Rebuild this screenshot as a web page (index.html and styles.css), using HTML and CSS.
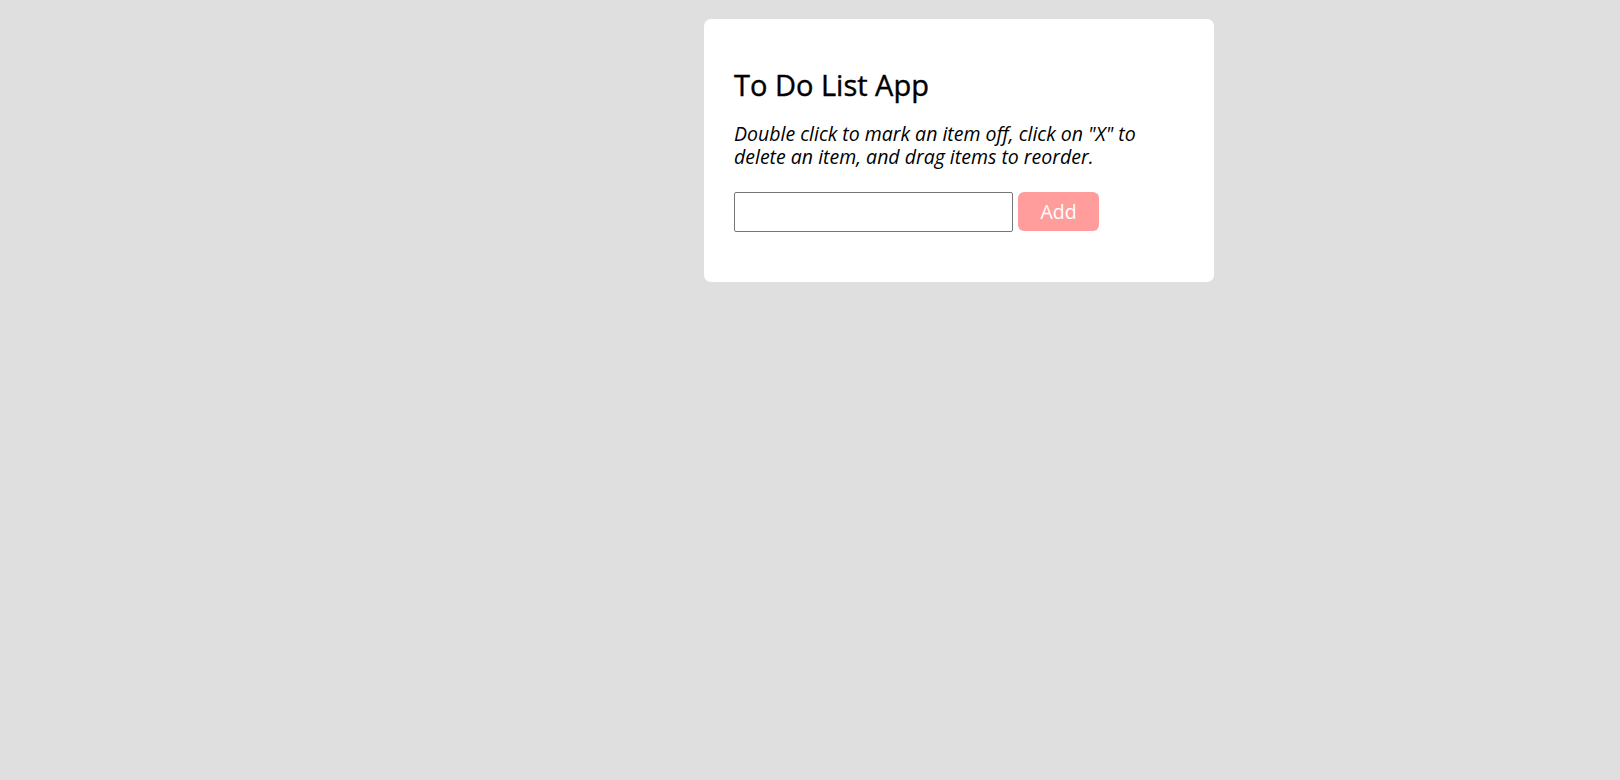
FILE: index.html
```html
<!DOCTYPE html>
<html lang="en">
<head>
<meta charset="utf-8">
<title>To Do List App</title>
<link rel="stylesheet" href="styles.css">
</head>
<body>
<main class="card">
  <h1 class="title">To Do List App</h1>
  <p class="hint">Double click to mark an item off, click on "X" to delete an item, and drag items to reorder.</p>
  <form class="add-form">
    <input class="add-input" type="text">
    <button class="add-btn" type="button">Add</button>
  </form>
  <ul class="list"></ul>
</main>
</body>
</html>
```
FILE: styles.css
```css
html, body {
  margin: 0;
  padding: 0;
}
body {
  background: #dfdfdf;
  font-family: "Open Sans", "Liberation Sans", sans-serif;
  color: #000;
  padding-top: 19px;
}
.card {
  box-sizing: border-box;
  width: 510px;
  margin-left: 704px;
  background: #fff;
  border-radius: 7px;
  padding: 47px 30px 50px;
}
.title {
  margin: 0 0 20px;
  font-size: 29px;
  font-weight: 400;
  line-height: 37px;
  -webkit-text-stroke: 0.4px #000;
}
.hint {
  margin: 0 0 24px;
  font-style: italic;
  font-size: 19.5px;
  line-height: 22.5px;
}
.add-form {
  display: flex;
  align-items: flex-start;
  gap: 5px;
  margin: 0;
}
.add-input {
  box-sizing: border-box;
  width: 279px;
  height: 40px;
  border: 1px solid #767676;
  border-radius: 2px;
  margin: 0;
  padding: 0 6px;
  font-family: inherit;
  font-size: 18px;
}
.add-btn {
  box-sizing: border-box;
  width: 81px;
  height: 39px;
  border: none;
  border-radius: 6px;
  background: #ff9c9c;
  color: #fff;
  font-family: "Open Sans", sans-serif;
  font-size: 19.5px;
  line-height: 39px;
  padding: 0;
}
.list {
  margin: 0;
  padding: 0;
  list-style: none;
}
```
